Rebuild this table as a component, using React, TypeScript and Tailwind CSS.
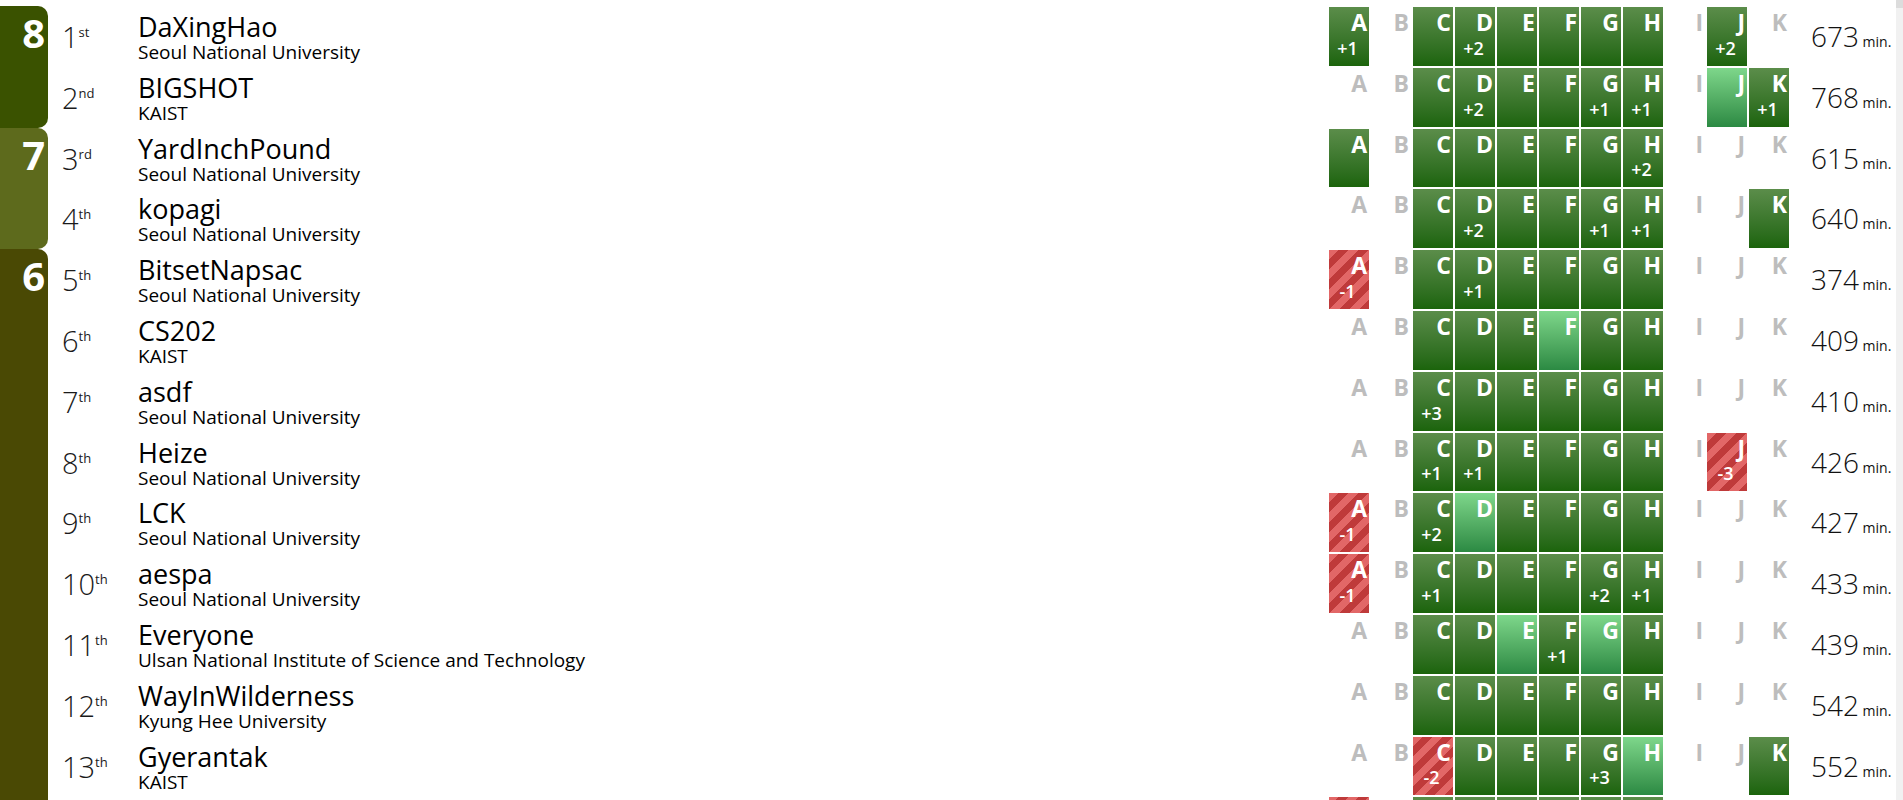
import React from "react";

type Team = {
  rank: number;
  name: string;
  univ: string;
  time: number;
  cells: string[];
};

// cell codes: "." unsolved, "o" solved, "+n" solved after n wrong, "*" first to solve, "x-n" failing
const groups: { solved: number; color: string; teams: Team[] }[] = [
  {
    solved: 8,
    color: "bg-[#3a5200]",
    teams: [
      { rank: 1, name: "DaXingHao", univ: "Seoul National University", time: 673, cells: ["+1", ".", "o", "+2", "o", "o", "o", "o", ".", "+2", "."] },
      { rank: 2, name: "BIGSHOT", univ: "KAIST", time: 768, cells: [".", ".", "o", "+2", "o", "o", "+1", "+1", ".", "*", "+1"] },
    ],
  },
  {
    solved: 7,
    color: "bg-[#5d6a1c]",
    teams: [
      { rank: 3, name: "YardInchPound", univ: "Seoul National University", time: 615, cells: ["o", ".", "o", "o", "o", "o", "o", "+2", ".", ".", "."] },
      { rank: 4, name: "kopagi", univ: "Seoul National University", time: 640, cells: [".", ".", "o", "+2", "o", "o", "+1", "+1", ".", ".", "o"] },
    ],
  },
  {
    solved: 6,
    color: "bg-[#4a4904]",
    teams: [
      { rank: 5, name: "BitsetNapsac", univ: "Seoul National University", time: 374, cells: ["x-1", ".", "o", "+1", "o", "o", "o", "o", ".", ".", "."] },
      { rank: 6, name: "CS202", univ: "KAIST", time: 409, cells: [".", ".", "o", "o", "o", "*", "o", "o", ".", ".", "."] },
      { rank: 7, name: "asdf", univ: "Seoul National University", time: 410, cells: [".", ".", "+3", "o", "o", "o", "o", "o", ".", ".", "."] },
      { rank: 8, name: "Heize", univ: "Seoul National University", time: 426, cells: [".", ".", "+1", "+1", "o", "o", "o", "o", ".", "x-3", "."] },
      { rank: 9, name: "LCK", univ: "Seoul National University", time: 427, cells: ["x-1", ".", "+2", "*", "o", "o", "o", "o", ".", ".", "."] },
      { rank: 10, name: "aespa", univ: "Seoul National University", time: 433, cells: ["x-1", ".", "+1", "o", "o", "o", "+2", "+1", ".", ".", "."] },
      { rank: 11, name: "Everyone", univ: "Ulsan National Institute of Science and Technology", time: 439, cells: [".", ".", "o", "o", "*", "+1", "*", "o", ".", ".", "."] },
      { rank: 12, name: "WayInWilderness", univ: "Kyung Hee University", time: 542, cells: [".", ".", "o", "o", "o", "o", "o", "o", ".", ".", "."] },
      { rank: 13, name: "Gyerantak", univ: "KAIST", time: 552, cells: [".", ".", "x-2", "o", "o", "o", "+3", "*", ".", ".", "o"] },
      // next row only peeks in at the bottom edge, its texts are below the fold
      { rank: 0, name: "", univ: "", time: 0, cells: ["x-1", ".", "o", "o", "o", "o", "o", "o", ".", ".", "."] },
    ],
  },
];

const letters = ["A", "B", "C", "D", "E", "F", "G", "H", "I", "J", "K"];

function suffix(n: number) {
  if (n % 100 >= 11 && n % 100 <= 13) return "th";
  if (n % 10 === 1) return "st";
  if (n % 10 === 2) return "nd";
  if (n % 10 === 3) return "rd";
  return "th";
}

function Cell({ code, letter }: { code: string; letter: string }) {
  if (code === ".") {
    return (
      <div className="w-[40px] h-[58.8px] pt-[2px] pr-[2px] text-right text-[23px] leading-[27px] font-bold text-[#bdbdbd]">
        {letter}
      </div>
    );
  }

  let bg = "bg-linear-to-b from-[#5b8d4a] to-[#1b640b]";
  let count = "";
  if (code.startsWith("x")) {
    bg = "bg-[image:repeating-linear-gradient(135deg,#e26767_0_7px,#bf3a3a_7px_14px)]";
    count = code.slice(1);
  } else if (code.startsWith("*")) {
    bg = "bg-linear-to-b from-[#7ed78b] to-[#2b8a43]";
    count = code.slice(1);
  } else if (code.startsWith("+")) {
    count = code;
  }

  return (
    <div className={`w-[40px] h-[58.8px] flex flex-col text-white ${bg}`}>
      <div className="pt-[2px] pr-[2px] text-right text-[23px] leading-[27px] font-bold">{letter}</div>
      {count && (
        <div className="mt-auto pb-[7px] pr-[3px] text-center text-[18px] leading-[22px] font-semibold">{count}</div>
      )}
    </div>
  );
}

function Row({ team }: { team: Team }) {
  return (
    <div className="flex h-[60.8px] items-start">
      {/* rank */}
      <div className="w-[90px] shrink-0 pl-[14px] pt-[15px] text-[#1a1a1a] whitespace-nowrap">
        {team.rank > 0 && (
          <>
            <span className="text-[29px] leading-[32px] font-light">{team.rank}</span>
            <span className="text-[13px] leading-none align-[11px]">{suffix(team.rank)}</span>
          </>
        )}
      </div>

      {/* team */}
      <div className="flex-1 min-w-0 pt-[7px] text-black whitespace-nowrap">
        <div className="text-[27px] leading-[28px]">{team.name}</div>
        <div className="text-[19px] leading-[22px]">{team.univ}</div>
      </div>

      {/* problems */}
      <div className="flex gap-[2px] py-px shrink-0">
        {team.cells.map((c, i) => (
          <Cell key={i} code={c} letter={letters[i]} />
        ))}
      </div>

      {/* penalty */}
      <div className="ml-[22px] w-[85px] shrink-0 pt-[14px] text-[#111] whitespace-nowrap">
        {team.time > 0 && (
          <>
            <span className="text-[28px] leading-[32px] font-light">{team.time}</span>
            <span className="text-[14px]"> min.</span>
          </>
        )}
      </div>
    </div>
  );
}

export default function App() {
  return (
    <div className="flex h-[800px] w-full overflow-hidden bg-white font-['Open_Sans',sans-serif]">
      <div className="flex-1 min-w-0 pt-[6px]">
        {groups.map((g) => (
          <div key={g.solved} className="flex">
            <div className={`w-[48px] shrink-0 rounded-r-[10px] ${g.color} pt-[7px] pr-[3px] text-right text-[40px] leading-[40px] font-bold text-white`}>
              {g.solved}
            </div>
            <div className="flex-1 min-w-0">
              {g.teams.map((t, i) => (
                <Row key={i} team={t} />
              ))}
            </div>
          </div>
        ))}
      </div>

      {/* scroll track */}
      <div className="w-[7px] shrink-0 bg-[#f1f1f1] flex flex-col">
        <div className="h-[8px] bg-[#dcdcdc]" />
      </div>
    </div>
  );
}
